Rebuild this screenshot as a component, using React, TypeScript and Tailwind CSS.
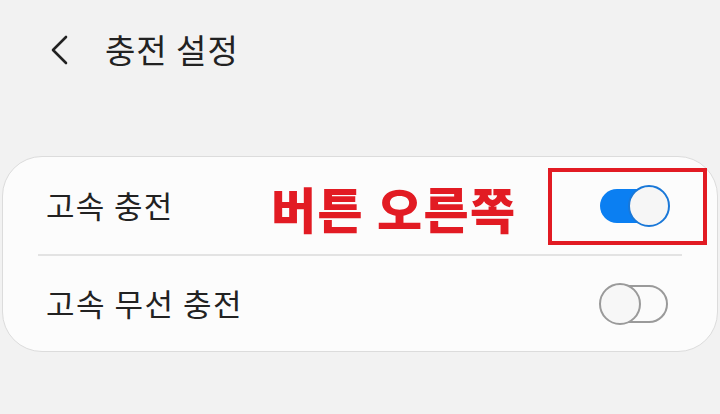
import React from "react";

const font = { fontFamily: '"Noto Sans CJK KR", "Noto Sans", sans-serif' };

function Toggle({ on }: { on: boolean }) {
  return (
    <div className="relative h-[42px] w-[71px] shrink-0">
      {on ? (
        <>
          <div className="absolute left-[1px] right-[3px] top-[4px] h-[34px] rounded-full bg-[#0b7ff2]" />
          <div className="absolute right-0 top-0 h-[42px] w-[42px] rounded-full border-2 border-[#1a78d8] bg-[#f6f6f6]" />
        </>
      ) : (
        <>
          <div className="absolute left-[2px] right-[2px] top-[2px] h-[38px] rounded-full border-2 border-[#9a9a9a] bg-[#fbfbfb]" />
          <div className="absolute left-0 top-0 h-[42px] w-[42px] rounded-full border-2 border-[#9a9a9a] bg-[#f7f7f7]" />
        </>
      )}
    </div>
  );
}

export default function App() {
  return (
    <div className="h-[414px] w-[720px] overflow-hidden bg-[#f2f2f2] text-[#222]" style={font}>
      <header className="flex h-[102px] items-center pb-[2px]">
        <svg className="ml-[48px]" width="22" height="32" viewBox="0 0 22 32" fill="none">
          <path d="M18 3 L5 16 L18 29" stroke="#222" strokeWidth="2.6" strokeLinecap="round" strokeLinejoin="round" />
        </svg>
        <h1 className="ml-[35px] text-[33px] font-normal tracking-[1px]">충전 설정</h1>
      </header>

      <div className="relative mx-[2px] mt-[54px] rounded-[40px] border border-[#dcdcdc] bg-[#fcfcfc]">
        <div className="flex h-[97px] items-center justify-between pl-[43px] pr-[47px]">
          <span className="text-[31px] tracking-[1.3px]">고속 충전</span>
          <Toggle on />
        </div>
        <div className="mx-[35px] h-[2px] bg-[#e3e3e3]" />
        <div className="flex h-[95px] items-center justify-between pl-[43px] pr-[47px]">
          <span className="text-[31px] tracking-[1.5px]">고속 무선 충전</span>
          <Toggle on={false} />
        </div>

        <span className="absolute left-[268px] top-[26px] text-[49px] font-black leading-none tracking-[1.5px] text-[#e21b23]">
          버튼 오른쪽
        </span>
        <div className="absolute left-[545px] top-[11px] h-[77px] w-[159px] border-4 border-[#e21b23]" />
      </div>
    </div>
  );
}
